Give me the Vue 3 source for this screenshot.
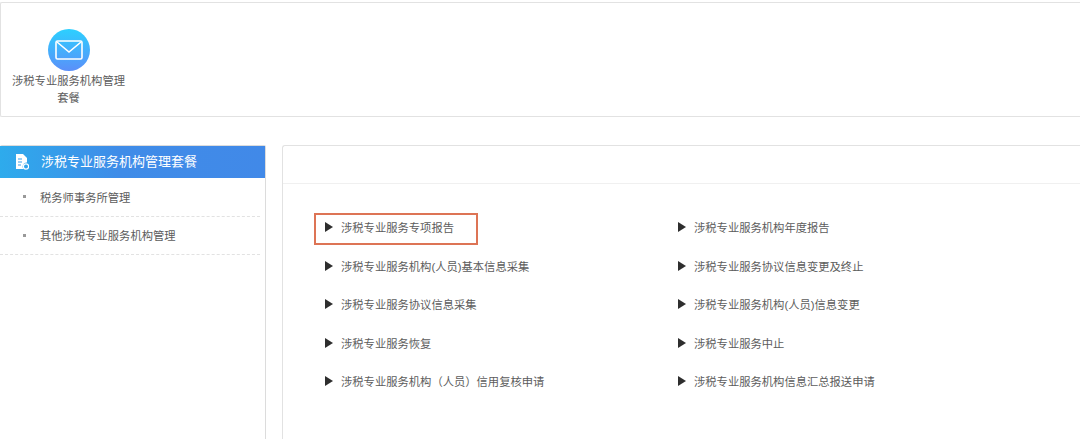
<script setup>
const left = ['涉税专业服务专项报告', '涉税专业服务机构(人员)基本信息采集', '涉税专业服务协议信息采集', '涉税专业服务恢复', '涉税专业服务机构（人员）信用复核申请']
const right = ['涉税专业服务机构年度报告', '涉税专业服务协议信息变更及终止', '涉税专业服务机构(人员)信息变更', '涉税专业服务中止', '涉税专业服务机构信息汇总报送申请']
const items = left.flatMap((l, i) => [{ t: l, on: i === 0 }, { t: right[i], on: false }])
</script>

<template>
  <div class="page">
    <section class="top">
      <div class="app">
        <div class="badge">
          <svg width="28" height="20" viewBox="0 0 28 20" fill="none" stroke="#fff" stroke-width="1.6">
            <rect x="1" y="1" width="26" height="18" rx="1.5" />
            <path d="M2 2 L14 12 L26 2" />
          </svg>
        </div>
        <div class="app-label">涉税专业服务机构管理套餐</div>
      </div>
    </section>
    <div class="body">
      <aside class="side">
        <div class="side-head">
          <svg class="doc" width="14" height="16" viewBox="0 0 14 16">
            <path fill="#fff" d="M1 0h7l4 4v4.5a4 4 0 0 0-3.5 6.5H1z" />
            <path stroke="#3aa0ea" stroke-width="1.2" d="M3 5h4M3 8h4M3 11h3" />
            <circle cx="11" cy="12.5" r="2.6" fill="none" stroke="#fff" stroke-width="1.2" />
          </svg>
          <span class="head-text">涉税专业服务机构管理套餐</span>
        </div>
        <div class="side-item"><i></i>税务师事务所管理</div>
        <div class="side-item"><i></i>其他涉税专业服务机构管理</div>
      </aside>
      <main class="main">
        <div class="main-head"></div>
        <div class="grid">
          <div v-for="it in items" :key="it.t" class="cell">
            <div class="link" :class="{ on: it.on }">
              <span class="arrow"></span>{{ it.t }}
            </div>
          </div>
        </div>
      </main>
    </div>
  </div>
</template>

<style scoped>
.page {
  width: 1080px;
  height: 439px;
  overflow: hidden;
  background: #fff;
  font-family: "Liberation Sans", "Noto Sans CJK SC", sans-serif;
  font-size: 11.3px;
  color: #5c5c5c;
  padding-top: 2px;
  box-sizing: border-box;
}
.top {
  height: 115px;
  box-sizing: border-box;
  border: 1px solid #e2e2e2;
  border-right: 0;
  border-radius: 2px 0 0 2px;
  padding-top: 26px;
}
.app {
  width: 123px;
  margin-left: 6px;
  text-align: center;
  line-height: 17px;
}
.badge {
  width: 42px;
  height: 42px;
  border-radius: 50%;
  margin: 0 auto 2px;
  background: linear-gradient(180deg, #2cd0ff, #5b8ff9);
  display: flex;
  align-items: center;
  justify-content: center;
}
.app-label { padding: 0 5px; }
.body {
  display: flex;
  gap: 16px;
  margin-top: 28px;
}
.side {
  width: 266px;
  height: 300px;
  flex: none;
  box-sizing: border-box;
  border: 1px solid #dcdcdc;
  border-left: 0;
  border-radius: 2px;
}
.side-head {
  height: 32px;
  display: flex;
  align-items: center;
  gap: 12px;
  padding-left: 15px;
  font-size: 13px;
  color: #fff;
  background: linear-gradient(90deg, #2eabec, #3f8ce8 45%, #4189e8);
}
.head-text { padding-bottom: 3px; }
.side-item {
  width: 260px;
  height: 38.5px;
  box-sizing: border-box;
  display: flex;
  align-items: center;
  border-bottom: 1px dashed #e2e2e2;
  padding-left: 23px;
}
.side-item i {
  width: 3px;
  height: 3px;
  background: #999;
  margin-right: 14px;
}
.main {
  flex: 1;
  height: 300px;
  box-sizing: border-box;
  border: 1px solid #e2e2e2;
  border-right: 0;
  border-radius: 3px 0 0 0;
}
.main-head {
  height: 37px;
  border-bottom: 1px solid #f0f0f0;
}
.grid {
  display: grid;
  grid-template-columns: 353px 353px;
  grid-auto-rows: 38.5px;
  padding: 29px 0 0 31px;
}
.cell { height: 38.5px; }
.link {
  width: 164px;
  height: 32px;
  box-sizing: border-box;
  display: flex;
  align-items: center;
  padding-left: 9px;
  padding-bottom: 4px;
  white-space: nowrap;
  border: 2px solid transparent;
}
.link.on { border-color: #dd7455; }
.arrow {
  width: 0;
  height: 0;
  flex: none;
  border-left: 8px solid #2e2e2e;
  border-top: 5px solid transparent;
  border-bottom: 5px solid transparent;
  margin-right: 8px;
}
</style>
